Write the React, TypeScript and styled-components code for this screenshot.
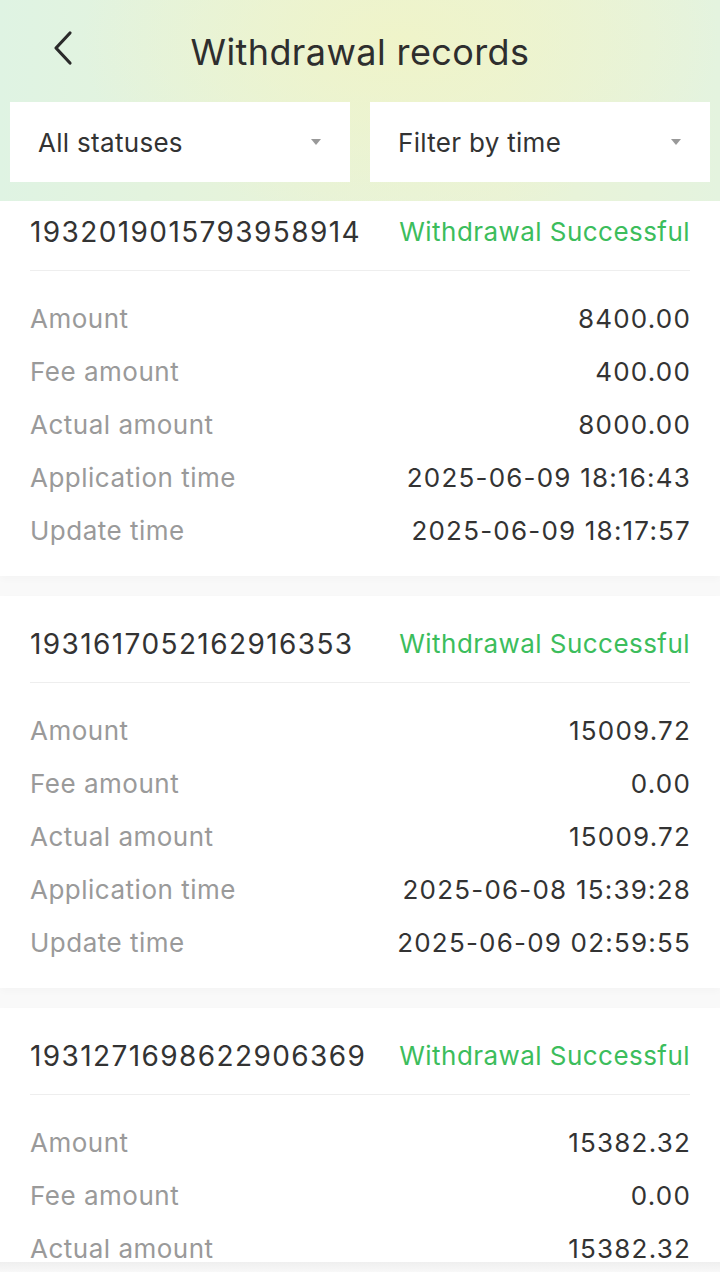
import React from "react";
import styled, { createGlobalStyle } from "styled-components";

const GlobalStyle = createGlobalStyle`
  html, body { margin: 0; padding: 0; background: #f9f9f9; }
  body { font-family: "Inter", "Lato", "Liberation Sans", sans-serif; -webkit-font-smoothing: antialiased; }
  * { box-sizing: border-box; }
`;

const Page = styled.div`
  width: 720px;
  min-height: 1272px;
  background: #f9f9f9;
  overflow: hidden;
`;

const Header = styled.header`
  position: sticky;
  top: 0;
  z-index: 2;
  height: 201px;
  padding: 0 10px 19px;
  display: flex;
  flex-direction: column;
  background:
    radial-gradient(ellipse 320px 180px at 400px 40px, rgba(240, 244, 200, 0.9), rgba(240, 244, 200, 0) 100%),
    linear-gradient(90deg, #dff3e3 0%, #e8f3d8 45%, #eaf3d6 70%, #e4f3df 100%);
`;

const TopBar = styled.div`
  height: 102px;
  display: flex;
  align-items: center;
  justify-content: center;
  position: relative;
`;

const BackButton = styled.button`
  position: absolute;
  left: 38px;
  top: 28px;
  width: 30px;
  height: 40px;
  padding: 0;
  border: none;
  background: transparent;
  display: flex;
  align-items: center;
  justify-content: center;
`;

const Title = styled.h1`
  margin: 2px 0 0 0;
  font-size: 36px;
  font-weight: 400;
  color: #2e2e2e;
  letter-spacing: 0.4px;
`;

const Filters = styled.div`
  display: grid;
  grid-template-columns: 1fr 1fr;
  gap: 20px;
`;

const Select = styled.div`
  height: 80px;
  background: #fff;
  display: flex;
  align-items: center;
  justify-content: space-between;
  padding: 0 29px 0 28px;
  font-size: 26px;
  color: #333;
  letter-spacing: 0.3px;
`;

const Caret = styled.span`
  width: 0;
  height: 0;
  border-left: 5px solid transparent;
  border-right: 5px solid transparent;
  border-top: 6px solid #999;
`;

const List = styled.div`
  margin-top: -17px;
  display: flex;
  flex-direction: column;
  gap: 20px;
  position: relative;
  z-index: 1;
`;

const Card = styled.section`
  background: #fff;
  padding: 0 30px 19px;
  box-shadow: 0 3px 8px rgba(0, 0, 0, 0.025);
`;

const CardHead = styled.div`
  display: flex;
  justify-content: space-between;
  align-items: center;
  padding: 28px 0 18px;
  line-height: 40px;
  border-bottom: 1px solid #eeeeee;
`;

const OrderNo = styled.span`
  font-size: 28px;
  color: #333;
  letter-spacing: 1.4px;
`;

const Status = styled.span`
  font-size: 26px;
  color: #3cbd5c;
  letter-spacing: 0.45px;
`;

const Rows = styled.div`
  padding-top: 21px;
  display: flex;
  flex-direction: column;
`;

const Row = styled.div`
  height: 53px;
  display: flex;
  align-items: center;
  justify-content: space-between;
  font-size: 26px;
`;

const Label = styled.span`
  color: #9a9a9a;
  letter-spacing: 0.5px;
`;

const Value = styled.span`
  color: #333;
  letter-spacing: 1.2px;
  margin-right: -1px;
`;

const BottomShade = styled.div`
  position: fixed;
  left: 0;
  right: 0;
  bottom: 0;
  height: 10px;
  z-index: 3;
  background: linear-gradient(180deg, #efefef, #f8f8f8);
`;

type Rec = {
  id: string;
  amount: string;
  fee: string;
  actual: string;
  applied: string;
  updated: string;
};

const records: Rec[] = [
  { id: "1932019015793958914", amount: "8400.00", fee: "400.00", actual: "8000.00", applied: "2025-06-09 18:16:43", updated: "2025-06-09 18:17:57" },
  { id: "1931617052162916353", amount: "15009.72", fee: "0.00", actual: "15009.72", applied: "2025-06-08 15:39:28", updated: "2025-06-09 02:59:55" },
  { id: "1931271698622906369", amount: "15382.32", fee: "0.00", actual: "15382.32", applied: "2025-06-07 16:42:10", updated: "2025-06-08 09:21:36" },
];

export default function App() {
  return (
    <>
      <GlobalStyle />
      <Page>
        <Header>
          <TopBar>
            <BackButton aria-label="back">
              <svg width="24" height="36" viewBox="0 0 24 36" fill="none">
                <path d="M19 3 L5 18 L19 33" stroke="#2a2a2a" strokeWidth="3.2" strokeLinecap="round" strokeLinejoin="round" />
              </svg>
            </BackButton>
            <Title>Withdrawal records</Title>
          </TopBar>
          <Filters>
            <Select>
              All statuses
              <Caret />
            </Select>
            <Select>
              Filter by time
              <Caret />
            </Select>
          </Filters>
        </Header>
        <List>
          {records.map((r) => (
            <Card key={r.id}>
              <CardHead>
                <OrderNo>{r.id}</OrderNo>
                <Status>Withdrawal Successful</Status>
              </CardHead>
              <Rows>
                <Row><Label>Amount</Label><Value>{r.amount}</Value></Row>
                <Row><Label>Fee amount</Label><Value>{r.fee}</Value></Row>
                <Row><Label>Actual amount</Label><Value>{r.actual}</Value></Row>
                <Row><Label>Application time</Label><Value>{r.applied}</Value></Row>
                <Row><Label>Update time</Label><Value>{r.updated}</Value></Row>
              </Rows>
            </Card>
          ))}
        </List>
        <BottomShade />
      </Page>
    </>
  );
}
